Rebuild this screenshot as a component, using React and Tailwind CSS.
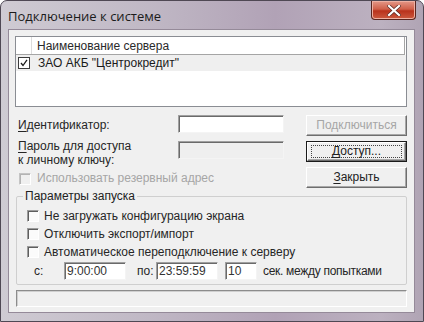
import React from "react";

const FONT = { fontFamily: '"Liberation Sans", Arial, sans-serif' };

// sunken 3D checkbox (classic look)
function Box({ disabled = false, checked = false }) {
  return (
    <span
      className={`inline-flex items-center justify-center w-[12px] h-[12px] shrink-0 border border-r-white border-b-white ${
        disabled
          ? "border-t-[#c4c4c4] border-l-[#c4c4c4] bg-[#f0f0f0] shadow-[inset_1px_1px_0_#b4b4b4]"
          : "border-t-[#9c9c9c] border-l-[#9c9c9c] bg-[#fbfbfb] shadow-[inset_1px_1px_0_#5e5e5e]"
      }`}
    >
      {checked && (
        <svg width="8" height="8" viewBox="0 0 8 8">
          <path d="M1 4 L3 6 L7 1" fill="none" stroke="#222" strokeWidth="1.4" />
        </svg>
      )}
    </span>
  );
}

function Field({ value = "", disabled = false, className = "" }) {
  return (
    <div
      className={`h-[18px] border border-t-[#a0a0a0] border-l-[#a0a0a0] border-r-[#f4f4f4] border-b-[#f4f4f4] shadow-[inset_1px_1px_0_#6a6a6a] pl-[2px] text-[12px] leading-[16px] text-[#333] ${
        disabled ? "bg-[#efefef]" : "bg-white"
      } ${className}`}
    >
      {value}
    </div>
  );
}

function Btn({ children, disabled = false, isDefault = false }) {
  const face = (
    <div
      className={`h-full w-full border border-t-white border-l-white border-r-[#6e6e6e] border-b-[#6e6e6e] shadow-[inset_-1px_-1px_0_#a8a8a8] bg-[#f0f0f0] flex items-center justify-center text-[12px] ${
        disabled ? "text-[#a6a6a6]" : "text-[#222]"
      }`}
    >
      {isDefault ? (
        <span className="border border-dotted border-[#444] w-[91px] h-[13px] flex items-center justify-center leading-[11px]">
          {children}
        </span>
      ) : (
        children
      )}
    </div>
  );
  return (
    <div
      className={`h-[21px] w-[101px] ${
        isDefault ? "border border-[#1a1a1a]" : ""
      }`}
    >
      {face}
    </div>
  );
}

const U = ({ children }) => (
  <span className="underline underline-offset-[2px] decoration-[1px]">
    {children}
  </span>
);

export default function App() {
  return (
    <div
      className="w-[424px] h-[322px] overflow-hidden flex flex-col border border-[#4f4854] rounded-t-[7px] bg-[linear-gradient(90deg,#cfcbd3_0%,#c0b8c5_35%,#b1a2b6_65%,#bcb1c0_90%,#b0a4b4_100%)]"
      style={FONT}
    >
      {/* title bar */}
      <div className="h-[28px] shrink-0 flex justify-between items-start">
        <span
          className="pl-[7px] pt-[7px] text-[13px] leading-[16px] text-[#1b1b1b]"
          style={{ fontFamily: '"Open Sans", "Noto Sans", sans-serif' }}
        >
          Подключение к системе
        </span>
        <div className="mr-[7px] w-[45px] h-[19px] rounded-b-[4px] border border-t-0 border-[#5a2620] bg-[linear-gradient(180deg,#e49888_0%,#d0604a_45%,#b9321c_55%,#cc5a40_100%)] flex items-center justify-center shadow-[inset_0_0_0_1px_#eeb0a2]">
          <svg width="14" height="11" viewBox="0 0 14 11">
            <path d="M2 1 L12 10 M12 1 L2 10" stroke="#5a2a25" strokeWidth="3.6" strokeLinecap="square" />
            <path d="M2 1 L12 10 M12 1 L2 10" stroke="#ffffff" strokeWidth="2.2" strokeLinecap="square" />
          </svg>
        </div>
      </div>

      {/* client area */}
      <div className="ml-[7px] mr-[8px] h-[284px] shrink-0 border border-[#958a99] bg-[#f0f0f0] pt-[6px] pl-[6px] pr-[7px] pb-[5px] flex flex-col text-[12px] leading-[13px] text-[#262626]">
        {/* server list */}
        <div className="h-[71px] border border-[#8a8d93] bg-white flex flex-col">
          <div className="h-[18px] flex border-b border-[#a5a5a5] mr-[1px] border-r">
            <div className="w-[16px] border-r border-[#dcdcdc]" />
            <div className="pl-[5px] leading-[18px] text-[#2a2a2a]">
              Наименование сервера
            </div>
          </div>
          <div className="h-[16px] flex items-center bg-[#efefef]">
            <div className="w-[16px] flex justify-center">
              <span className="w-[12px] h-[12px] border border-[#3c3c3c] bg-white flex items-center justify-center">
                <svg width="8" height="8" viewBox="0 0 8 8">
                  <path d="M1 4 L3 6.5 L7 0.8" fill="none" stroke="#1a1a1a" strokeWidth="1.3" />
                </svg>
              </span>
            </div>
            <span className="pl-[6px] text-[#1a1a1a]">ЗАО АКБ "Центрокредит"</span>
          </div>
        </div>

        {/* credentials + buttons */}
        <div className="mt-[8px] h-[73px] flex">
          <div className="flex-1 flex flex-col">
            <div className="flex">
              <span className="w-[163px] pl-[3px] pt-[4px]">
                <U>И</U>дентификатор:
              </span>
              <Field className="w-[106px]" />
            </div>
            <div className="flex mt-[8px]">
              <span className="w-[163px] pl-[3px] -mt-[1px] leading-[13.5px]">
                <U>П</U>ароль для доступа
                <br />к личному ключу:
              </span>
              <Field className="w-[106px]" disabled />
            </div>
            <div className="flex items-center gap-[6px] pl-[4px] mt-[5px] text-[#a6a6a6]">
              <Box disabled />
              <span>Использовать резервный адрес</span>
            </div>
          </div>
          <div className="w-[101px] flex flex-col gap-[5px]">
            <Btn disabled>Подключиться</Btn>
            <Btn isDefault>
              <span>
                <U>Д</U>оступ...
              </span>
            </Btn>
            <Btn>
              <span>
                <U>З</U>акрыть
              </span>
            </Btn>
          </div>
        </div>

        {/* launch params */}
        <fieldset className="mt-[2px] ml-[1px] h-[95px] border border-[#cfcfcf] rounded-[2px] px-0 pb-[4px]">
          <legend className="ml-[6px] px-[2px] leading-[13px] text-[#222]">
            Параметры запуска
          </legend>
          <div className="pt-[4px] pl-[10px] flex flex-col">
            {[
              "Не загружать конфигурацию экрана",
              "Отключить экспорт/импорт",
              "Автоматическое переподключение к серверу",
            ].map((t) => (
              <div key={t} className="h-[18px] flex items-center gap-[5px]">
                <Box />
                <span>{t}</span>
              </div>
            ))}
          </div>
          <div className="mt-[1px] pl-[17px] flex items-center">
            <span className="w-[30px]">с:</span>
            <Field className="w-[62px] bg-[#ececec]" value="9:00:00" />
            <span className="ml-[11px] w-[19px]">по:</span>
            <Field className="w-[62px] bg-[#ececec]" value="23:59:59" />
            <Field className="ml-[7px] w-[32px] bg-[#ececec]" value="10" />
            <span className="ml-[6px] tracking-[-0.3px]">сек. между попытками</span>
          </div>
        </fieldset>

        {/* status bar */}
        <div className="mt-[5px] ml-[1px] h-[17px] border border-t-[#8c8c8c] border-l-[#8c8c8c] border-r-white border-b-white shadow-[inset_1px_1px_0_#cfcfcf]" />
      </div>
    </div>
  );
}
